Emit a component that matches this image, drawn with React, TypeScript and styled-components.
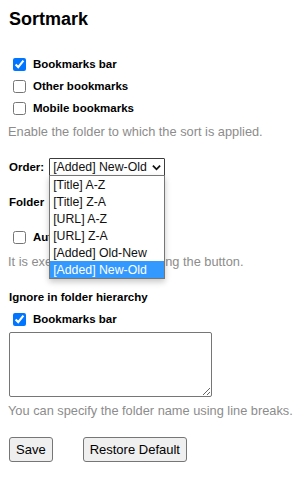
import styled, { createGlobalStyle } from 'styled-components';

const orders = [
  '[Title] A-Z',
  '[Title] Z-A',
  '[URL] A-Z',
  '[URL] Z-A',
  '[Added] Old-New',
  '[Added] New-Old',
];

const GlobalStyle = createGlobalStyle`
  body {
    margin: 0;
    background: #fff;
    font-family: 'Liberation Sans', Arial, sans-serif;
    color: #000;
  }
`;

const App = () => {
  return (
    <Page>
      <GlobalStyle />
      <Title>Sortmark</Title>

      <CheckList>
        <CheckRow>
          <Box type="checkbox" defaultChecked />
          Bookmarks bar
        </CheckRow>
        <CheckRow>
          <Box type="checkbox" />
          Other bookmarks
        </CheckRow>
        <CheckRow>
          <Box type="checkbox" />
          Mobile bookmarks
        </CheckRow>
      </CheckList>
      <Hint $top={5}>Enable the folder to which the sort is applied.</Hint>

      <FieldRow $top={18}>
        <Label>Order:</Label>
        <SelectWrap>
          <SelectBox $width={116}>
            [Added] New-Old
            <Chevron viewBox="0 0 10 7">
              <path d="M1 1.5 L5 5.5 L9 1.5" />
            </Chevron>
          </SelectBox>
          <OptionList>
            {orders.map((o, i) => (
              <Option key={o} $active={i === orders.length - 1}>
                {o}
              </Option>
            ))}
          </OptionList>
        </SelectWrap>
      </FieldRow>

      <FieldRow $top={17}>
        <Label>Folder</Label>
        <SelectBox $width={60}>Top</SelectBox>
      </FieldRow>

      <CheckRow $top={15}>
        <Box type="checkbox" />
        Auto sort
      </CheckRow>
      <Hint $top={6}>It is executed without pressing the button.</Hint>

      <Heading>Ignore in folder hierarchy</Heading>
      <CheckRow $top={3}>
        <Box type="checkbox" defaultChecked />
        Bookmarks bar
      </CheckRow>
      <TextArea />
      <Hint $top={6}>You can specify the folder name using line breaks.</Hint>

      <Buttons>
        <Button>Save</Button>
        <Button>Restore Default</Button>
      </Buttons>
    </Page>
  );
};

const Page = styled.div`
  padding: 8px 8px;
  display: flex;
  flex-direction: column;
  align-items: flex-start;
`;

const Title = styled.h1`
  margin: 0 0 0 1px;
  font-size: 18px;
  line-height: 22px;
  font-weight: 700;
`;

const CheckList = styled.div`
  margin-top: 23px;
  display: flex;
  flex-direction: column;
`;

const CheckRow = styled.label<{ $top?: number }>`
  margin-top: ${(p) => p.$top ?? 0}px;
  height: 22px;
  display: flex;
  align-items: center;
  font-size: 11.5px;
  font-weight: 700;
`;

const Box = styled.input`
  width: 13px;
  height: 13px;
  margin: 0 7px 0 5px;
`;

const Hint = styled.div<{ $top: number }>`
  margin-top: ${(p) => p.$top}px;
  font-size: 12.8px;
  line-height: 16px;
  color: #8c8c8c;
`;

const FieldRow = styled.div<{ $top: number }>`
  margin-top: ${(p) => p.$top}px;
  display: flex;
  align-items: center;
  gap: 5px;
  margin-left: 1px;
`;

const Label = styled.span`
  font-size: 11.5px;
  font-weight: 700;
`;

const SelectWrap = styled.div`
  position: relative;
`;

const SelectBox = styled.div<{ $width: number }>`
  box-sizing: border-box;
  width: ${(p) => p.$width}px;
  height: 18px;
  padding: 0 3px;
  border: 1px solid #3c3c3c;
  border-radius: 1px;
  display: flex;
  align-items: center;
  justify-content: space-between;
  font-size: 12.3px;
  color: #111;
  background: #fff;
`;

const Chevron = styled.svg`
  width: 9px;
  height: 7px;
  fill: none;
  stroke: #111;
  stroke-width: 2;
`;

const OptionList = styled.div`
  position: absolute;
  top: 17px;
  left: 0;
  z-index: 2;
  box-sizing: border-box;
  width: 116px;
  background: #fff;
  border: 1px solid #767676;
  box-shadow: 0 3px 6px rgba(0, 0, 0, 0.22);
`;

const Option = styled.div<{ $active: boolean }>`
  height: 17px;
  padding: 0 3px;
  display: flex;
  align-items: center;
  font-size: 12.3px;
  color: ${(p) => (p.$active ? '#fff' : '#111')};
  background: ${(p) => (p.$active ? '#3399ff' : 'transparent')};
`;

const Heading = styled.div`
  margin: 19px 0 0 1px;
  font-size: 11.5px;
  line-height: 16px;
  font-weight: 700;
`;

const TextArea = styled.textarea`
  box-sizing: border-box;
  margin: 2px 0 0 1px;
  width: 203px;
  height: 65px;
  border: 1px solid #767676;
  border-radius: 2px;
  padding: 2px;
  font-family: inherit;
`;

const Buttons = styled.div`
  margin: 18px 0 0 1px;
  display: flex;
  gap: 30px;
`;

const Button = styled.button`
  height: 25px;
  padding: 0 6px;
  border: 1px solid #767676;
  border-radius: 3px;
  background: #efefef;
  font-family: inherit;
  font-size: 13px;
  color: #000;
`;

export default App;
